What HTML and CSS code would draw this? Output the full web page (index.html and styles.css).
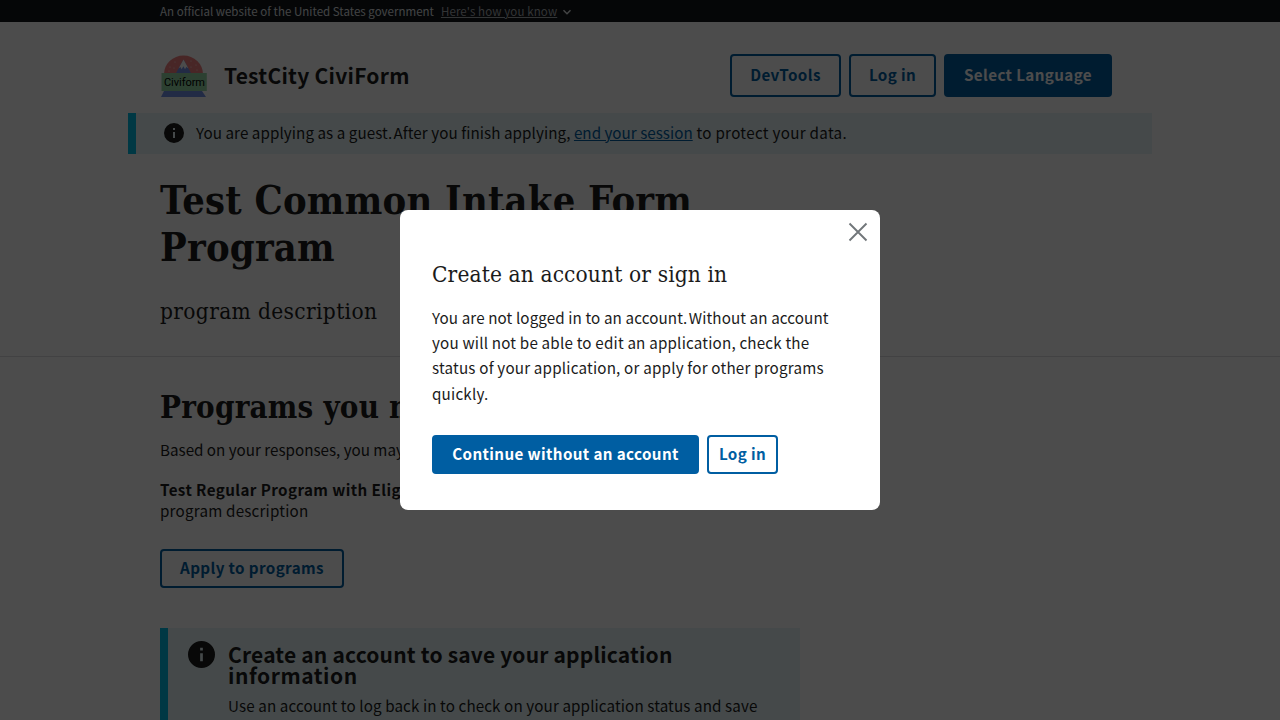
FILE: index.html
```html
<!DOCTYPE html>
<html lang="en">
<head>
<meta charset="utf-8">
<title>TestCity CiviForm</title>
<link rel="stylesheet" href="styles.css">
</head>
<body>
<div class="gov-banner">
  <span class="gov-text">An official website of the United States government</span>
  <a class="gov-link">Here's how you know</a>
  <svg class="gov-chevron" viewBox="0 0 10 8"><path d="M1.500 2.200 5 5.700l3.500-3.500" fill="none" stroke="currentColor" stroke-width="1.500"/></svg>
</div>
<header class="header">
  <svg class="logo" viewBox="0 0 48 44">
    <path d="M4 20a19.500 18.500 0 0 1 39 0z" fill="#f08080"/>
    <g fill="#ffd0d0"><circle cx="10" cy="13" r=".6"/><circle cx="15" cy="8" r=".6"/><circle cx="9" cy="17" r=".6"/><circle cx="14" cy="14" r=".6"/><circle cx="31" cy="7" r=".6"/><circle cx="36" cy="11" r=".6"/><circle cx="31" cy="13" r=".6"/><circle cx="37" cy="16" r=".6"/></g>
    <path d="M15.500 20 23.500 5.500 31.500 20z" fill="#7490e8"/>
    <path d="M18.700 14.200 23.500 5.500l4.800 8.700-2-1.200-1.300 2.200-1.500-3-2 3-1-2.200z" fill="#fff"/>
    <path d="M1.500 19h45.300v18H1.500z" fill="#94d8a6"/>
    <path d="M4 37h38l4 6H1z" fill="#7490e8"/>
    <text class="logo-text" x="4" y="32" textLength="41">Civiform</text>
  </svg>
  <span class="site-title">TestCity CiviForm</span>
  <nav class="header-actions">
    <button class="btn btn-tall w-dev">DevTools</button>
    <button class="btn btn-tall w-login">Log in</button>
    <button class="btn btn-tall btn-solid w-lang">Select Language</button>
  </nav>
</header>
<div class="guest-alert">
  <svg class="info-icon" viewBox="2 2 20 20"><path d="M12 2a10 10 0 1 0 0 20 10 10 0 0 0 0-20zm1 15h-2v-6h2v6zm0-8h-2V7h2v2z" fill="#1b1b1b"/></svg>
  <p class="guest-text">You are applying as a guest<span class="stop">.</span> After you finish applying, <a class="link">end your session</a><span class="guest-tail"> to protect your data.</span></p>
</div>
<section class="intro">
  <h1 class="page-title">Test Common Intake Form<br>Program</h1>
  <p class="lead">program description</p>
</section>
<main class="main">
  <h2 class="section-title">Programs you may</h2>
  <p class="based">Based on your responses, you may</p>
  <h3 class="program-name">Test Regular Program with Eligibility</h3>
  <p class="program-desc">program description</p>
  <button class="btn w-apply">Apply to programs</button>
  <div class="save-alert">
    <svg class="info-icon-large" viewBox="2 2 20 20"><path d="M12 2a10 10 0 1 0 0 20 10 10 0 0 0 0-20zm1 15h-2v-6h2v6zm0-8h-2V7h2v2z" fill="#1b1b1b"/></svg>
    <div>
      <h3 class="save-title">Create an account to save your application<br><span class="save-title-end">information</span></h3>
      <p class="save-text">Use an account to log back in to check on your application status and save</p>
    </div>
  </div>
</main>
<div class="overlay">
  <div class="modal" role="dialog">
    <button class="close" aria-label="Close"><svg viewBox="0 0 20 20"><path d="m1.500 1.500 17 17m0-17-17 17" stroke="#71767a" stroke-width="1.900" fill="none"/></svg></button>
    <h2 class="modal-title">Create an account or sign in</h2>
    <p class="modal-text"><span class="modal-line">You are not logged in to an account<span class="stop">.</span> Without an account</span><br>you will not be able to edit an application, check the<br>status of your application, or apply for other programs<br>quickly.</p>
    <div class="modal-actions">
      <button class="btn btn-solid w-continue">Continue without an account</button>
      <button class="btn w-modal-login">Log in</button>
    </div>
  </div>
</div>
</body>
</html>
```
FILE: styles.css
```css
* { box-sizing: border-box; }
body {
  margin: 0;
  height: 720px;
  overflow: hidden;
  background: #fff;
  color: #1b1b1b;
  font: 15.2px/25.4px "Noto Sans CJK SC", sans-serif;
  white-space: nowrap;
}
h1, h2, h3, p { margin: 0; }
.gov-banner {
  height: 22px;
  padding-left: 160px;
  display: flex;
  align-items: center;
  background: #11141a;
  color: #dfe1e2;
  font-size: 11.5px;
  line-height: 22px;
}
.gov-text { letter-spacing: 0.02px; }
.gov-link { margin-left: 7px; text-decoration: underline; color: #a9aeb1; letter-spacing: 0.12px; }
.gov-chevron { width: 10px; height: 8px; margin: 2px 0 0 5px; }
.header {
  height: 91px;
  padding: 32px 168px 0 160px;
  display: flex;
  align-items: flex-start;
}
.logo { width: 48px; height: 44px; }
.logo-text { font: 11px Roboto, sans-serif; }
.site-title { margin: 5px 0 0 16px; font-size: 21px; font-weight: 700; line-height: 32px; letter-spacing: 0.26px; }
.header-actions { margin-left: auto; display: flex; gap: 8px; }
.btn {
  height: 39px;
  padding: 0 0 2px;
  border: 2px solid #005ea2;
  border-radius: 4px;
  background: transparent;
  color: #005ea2;
  font: 700 15.2px/15px "Noto Sans CJK SC", sans-serif;
  letter-spacing: 0.38px;
}
.btn-solid { background: #005ea2; color: #fff; }
.btn-tall { height: 43px; }
.w-dev { width: 111px; }
.w-login { width: 87px; }
.w-lang { width: 168px; }
.w-apply { width: 184px; }
.w-continue { width: 267px; }
.w-modal-login { width: 71px; }
.guest-alert {
  height: 41px;
  margin: 0 128px;
  padding: 0 0 1px 28px;
  border-left: 8px solid #00bde3;
  background: #e7f6f8;
  display: flex;
  align-items: center;
  gap: 12px;
}
.guest-text { letter-spacing: 0.07px; padding-bottom: 1px; }
.guest-tail { letter-spacing: 0.3px; }
.stop { letter-spacing: -2px; }
.info-icon { width: 20px; height: 20px; }
.link { color: #005ea2; text-decoration: underline; letter-spacing: 0.02px; }
.intro {
  height: 203px;
  padding: 23px 160px 0;
  border-bottom: 1px solid #dcdee0;
}
.page-title, .section-title, .lead, .modal-title { font-family: "DejaVu Serif Condensed", "DejaVu Serif", serif; font-stretch: condensed; }
.page-title { font-size: 39.5px; line-height: 47px; font-weight: 700; letter-spacing: 0.22px; }
.lead { margin-top: 24px; font-size: 22.5px; line-height: 32px; letter-spacing: 0.35px; }
.main { padding: 31px 160px 0; }
.section-title { font-size: 31px; line-height: 38px; font-weight: 700; letter-spacing: 0.22px; }
.based { margin-top: 11px; }
.program-name { margin-top: 17px; font-size: 15.2px; line-height: 21px; font-weight: 700; letter-spacing: 0.4px; }
.program-desc { line-height: 21px; margin-bottom: 28px; letter-spacing: 0.2px; }
.w-apply { display: block; }
.save-alert {
  width: 640px;
  height: 92px;
  margin-top: 40px;
  padding: 13px 0 0 19px;
  border-left: 8px solid #00bde3;
  background: #e7f6f8;
  display: flex;
  gap: 13.5px;
}
.info-icon-large { width: 27px; height: 27px; margin: 0 0 0 0.500px; }
.save-title { font-size: 21px; line-height: 21px; font-weight: 700; margin-top: 3px; letter-spacing: 0.18px; }
.save-title-end { letter-spacing: 0.54px; }
.save-text { margin-top: 7px; letter-spacing: 0.11px; }
.overlay {
  position: absolute;
  inset: 0;
  display: flex;
  align-items: center;
  justify-content: center;
  background: rgba(0, 0, 0, 0.7);
}
.modal {
  width: 480px;
  height: 300px;
  padding: 12px 12px 0 32px;
  border-radius: 8px;
  background: #fff;
  display: flex;
  flex-direction: column;
}
.close {
  align-self: flex-end;
  width: 20px;
  height: 20px;
  padding: 0;
  border: 0;
  background: none;
}
.close svg { display: block; width: 20px; height: 20px; }
.modal-title { margin-top: 17px; font-size: 22.5px; line-height: 30px; font-weight: 400; letter-spacing: 0.12px; }
.modal-text { margin-top: 15.6px; letter-spacing: 0.19px; }
.modal-line { letter-spacing: 0.11px; }
.modal-actions { display: flex; gap: 8px; margin-top: 28.8px; }
```
